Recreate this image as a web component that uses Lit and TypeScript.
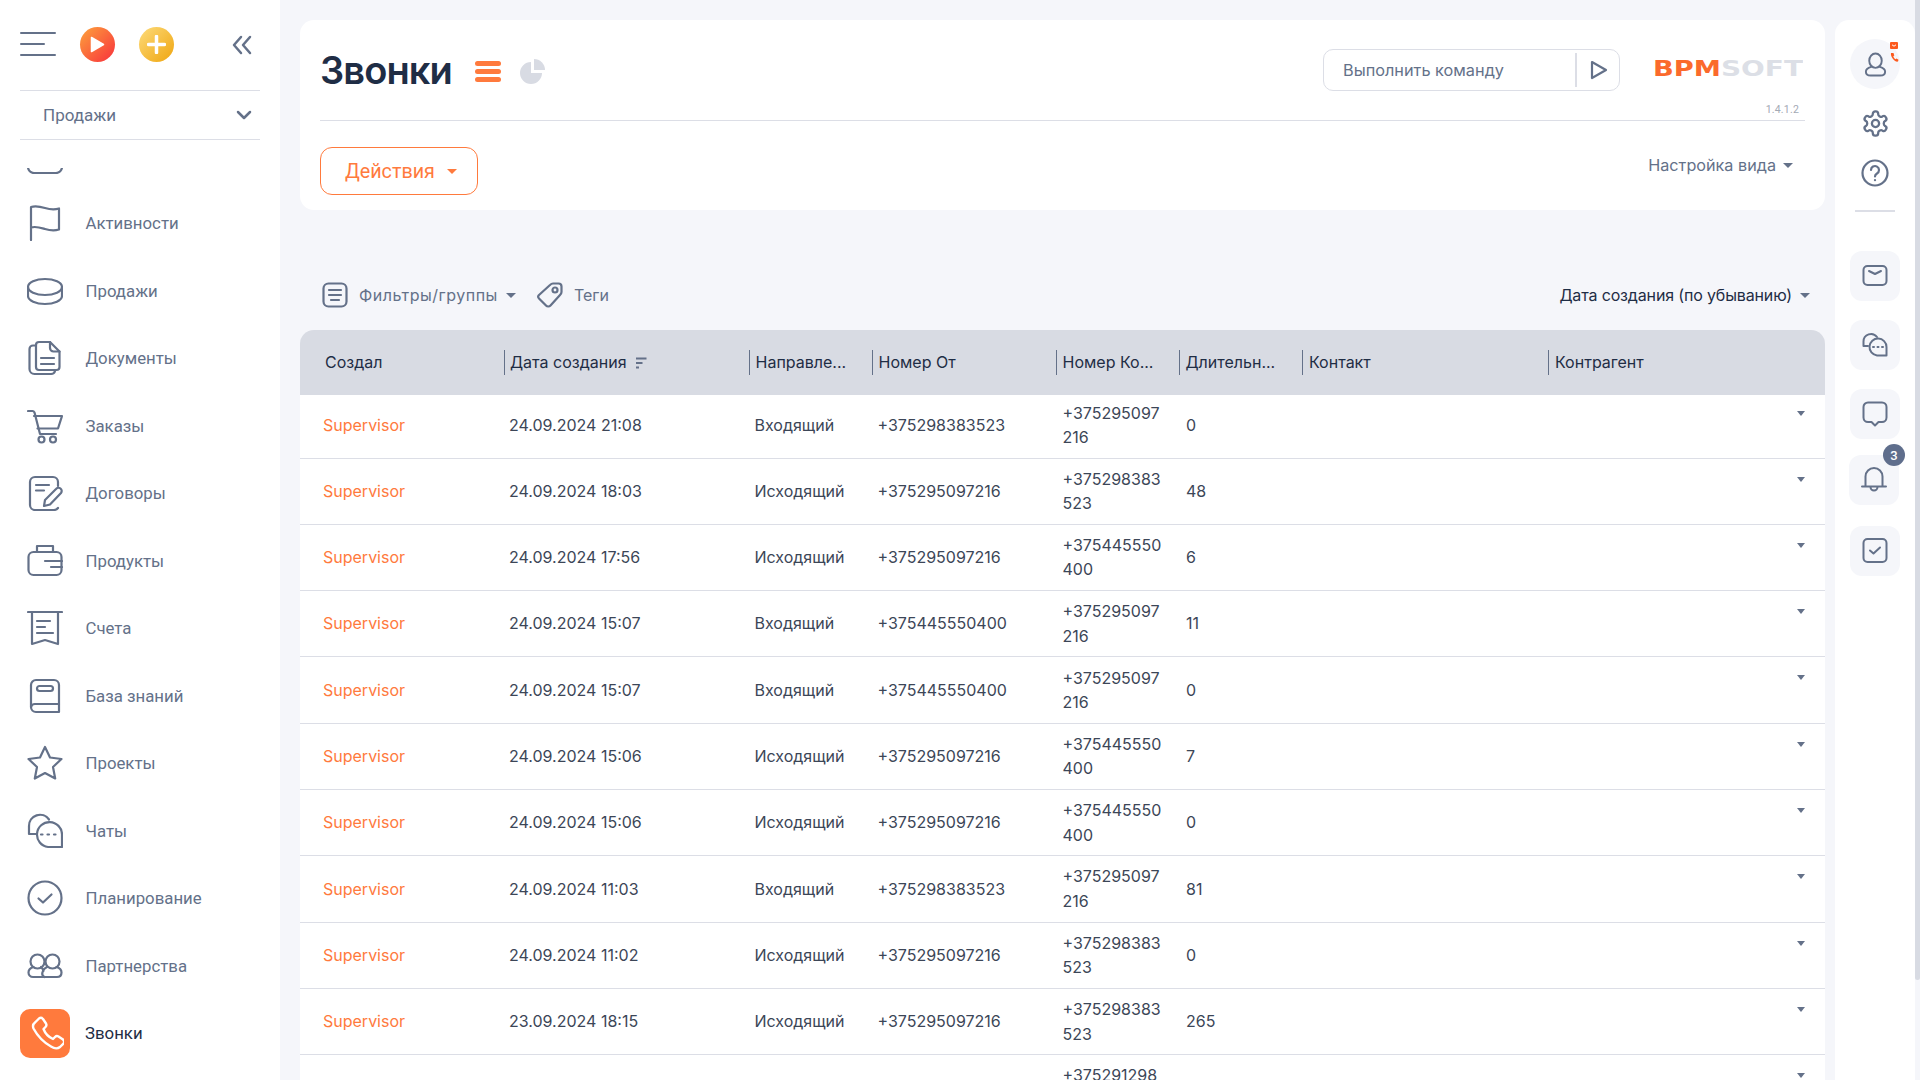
import { LitElement, html, svg, css } from "lit";
import { customElement } from "lit/decorators.js";

const stroke = (body: unknown, size = 36, box = 36, width = 2.2) => html`<svg
  width=${size} height=${size} viewBox="0 0 ${box} ${box}" fill="none" stroke="currentColor"
  stroke-width=${width} stroke-linecap="round" stroke-linejoin="round">${body}</svg>`;

const navIcons: Record<string, unknown> = {
  flag: svg`<path d="M4 35V2c5-1.500 9-.5 14 1s9 2 14 .5v21c-5 1.500-9 1-14-.5S9 21 4 22.500"/>`,
  coin: svg`<ellipse cx="18" cy="14" rx="17" ry="8"/><path d="M1 14v9c0 4.500 8 8 17 8s17-3.500 17-8v-9"/>`,
  docs: svg`<path d="M9 5.500H6a3.500 3.500 0 0 0-3.500 3.500v20A5 5 0 0 0 7.500 34H24a4 4 0 0 0 4-3"/><path d="M9 27V5a3 3 0 0 1 3-3h11l9.500 9.500V27a3 3 0 0 1-3 3H12a3 3 0 0 1-3-3z"/><path d="M23 2v6a3.500 3.500 0 0 0 3.500 3.500h6M14 18h13M14 24h13"/>`,
  cart: svg`<path d="M1 3h4.500c1 0 1.500.5 2 1.500L13 26h16"/><path d="M7 8h28l-4 12.500H10.500"/><circle cx="14.500" cy="31.500" r="3"/><circle cx="26" cy="31.500" r="3"/>`,
  contract: svg`<path d="M31 11V7a5 5 0 0 0-5-5H8a5 5 0 0 0-5 5v23a5 5 0 0 0 5 5h19a5 5 0 0 0 4-2"/><path d="M9 10h13M9 15.500h8"/><path d="M17 31l1-6 11-11a3 3 0 0 1 5 4L23 29.500z"/>`,
  wallet: svg`<path d="M10 9V3h16v6"/><rect x="1.500" y="9" width="33" height="23" rx="5"/><path d="M18 18h17M24 24h11"/>`,
  bill: svg`<path d="M1 2h34M5 2v32l13-4 13 4V2"/><path d="M10 11h13M10 17h8M10 23h16"/>`,
  book: svg`<path d="M4 29V7a5 5 0 0 1 5-5h18a5 5 0 0 1 5 5v27H9a5 5 0 0 1-5-5z"/><path d="M4 29a4 4 0 0 1 4-3h24"/><rect x="10" y="8" width="16" height="5" rx="2.500"/>`,
  star: svg`<path d="M18 2l5 10.500 11.500 1.500-8.500 8 2.200 11.500L18 28l-10.200 5.500L10 22l-8.500-8L13 12.500z"/>`,
  chats: svg`<path d="M9 21H2v-8a11 11 0 0 1 20-6.500"/><path d="M35 34H21a12.500 12.500 0 1 1 14-12.500z"/><path d="M14 21.500h1.500M20.500 21.500h1.500M27 21.500h1.500"/>`,
  check: svg`<circle cx="18" cy="18" r="16.500"/><path d="M11.500 18.500l4.500 4 8.500-8"/>`,
  partners: svg`<circle cx="10.500" cy="13.500" r="7"/><circle cx="25.500" cy="13.500" r="7"/><path d="M6.500 19C3 20 1.500 22 1.500 24.500 1.500 27 3.500 29 6 29h24c3 0 4.500-2 4.500-4.500S33 20 29.500 19M17.500 29c-2-1-3-3-1.500-6 .5-1.500 2-3 4-4M14 19c1 1 2 2 2.500 4"/>`,
  top: svg`<rect x="1" y="19" width="34" height="16" rx="6"/>`,
};

const phone = svg`<path d="M9 8.500l4-4a3 3 0 0 1 4 .5l3 4.500a3 3 0 0 1-.5 3.500l-2 2c1.500 4 5 8 9.500 10l2-2a3 3 0 0 1 3.500-.5l4.500 3a3 3 0 0 1 .5 4l-3.500 3.500c-2.500 2-6 1.500-9-.5C17 28 11 21 7.500 14.500c-1-2.500-.5-4.500 1.500-6z"/>`;

const nav = [
  ["Активности", "flag"],
  ["Продажи", "coin"],
  ["Документы", "docs"],
  ["Заказы", "cart"],
  ["Договоры", "contract"],
  ["Продукты", "wallet"],
  ["Счета", "bill"],
  ["База знаний", "book"],
  ["Проекты", "star"],
  ["Чаты", "chats"],
  ["Планирование", "check"],
  ["Партнерства", "partners"],
];

const columns = [
  ["Создал", 203.5],
  ["Дата создания", 245.5],
  ["Направле...", 123],
  ["Номер От", 184],
  ["Номер Ко...", 123],
  ["Длительн...", 122.5],
  ["Контакт", 246],
  ["Контрагент", 277],
] as const;

const rows = [
  ["24.09.2024 21:08", "Входящий", "+375298383523", "+375295097216", "0"],
  ["24.09.2024 18:03", "Исходящий", "+375295097216", "+375298383523", "48"],
  ["24.09.2024 17:56", "Исходящий", "+375295097216", "+375445550400", "6"],
  ["24.09.2024 15:07", "Входящий", "+375445550400", "+375295097216", "11"],
  ["24.09.2024 15:07", "Входящий", "+375445550400", "+375295097216", "0"],
  ["24.09.2024 15:06", "Исходящий", "+375295097216", "+375445550400", "7"],
  ["24.09.2024 15:06", "Исходящий", "+375295097216", "+375445550400", "0"],
  ["24.09.2024 11:03", "Входящий", "+375298383523", "+375295097216", "81"],
  ["24.09.2024 11:02", "Исходящий", "+375295097216", "+375298383523", "0"],
  ["23.09.2024 18:15", "Исходящий", "+375295097216", "+375298383523", "265"],
];

@customElement("app-root")
export class AppRoot extends LitElement {
  static styles = css`
    :host {
      display: grid;
      grid-template-columns: 280px 1fr 80px 5px;
      height: 1080px;
      overflow: hidden;
      background: #f5f6fa;
      font-family: "Roboto", sans-serif;
      color: #647189;
    }
    .caret {
      display: inline-block;
      border-left: 5px solid transparent;
      border-right: 5px solid transparent;
      border-top: 5px solid currentColor;
    }

    /* left menu */
    .side {
      background: #fff;
      height: 1080px;
      overflow: hidden;
      display: flex;
      flex-direction: column;
    }
    .side-top {
      display: flex;
      align-items: center;
      height: 90px;
      padding: 0 20px;
      flex: none;
    }
    .burger {
      display: flex;
      flex-direction: column;
      gap: 8.5px;
      width: 36px;
      margin-top: -2px;
    }
    .burger i {
      height: 2.5px;
      background: #647189;
      border-radius: 2px;
    }
    .burger i:nth-child(2) {
      width: 25px;
    }
    .round {
      width: 35px;
      height: 35px;
      border-radius: 50%;
      display: flex;
      align-items: center;
      justify-content: center;
      margin-top: -1px;
    }
    .round.play {
      margin-left: 24px;
      background: linear-gradient(135deg, #fda33c, #f8303c);
    }
    .round.plus {
      margin-left: 24px;
      background: linear-gradient(135deg, #fddb7a, #efa50f);
    }
    .collapse {
      margin-left: auto;
      margin-right: 8px;
      display: flex;
      margin-top: -1px;
    }
    .section {
      flex: none;
      margin: 0 20px;
      height: 48px;
      border-top: 1.5px solid #dcdee6;
      border-bottom: 1.5px solid #dcdee6;
      display: flex;
      align-items: center;
      justify-content: space-between;
      padding: 0 8px 0 23px;
      font-size: 17px;
    }
    .nav {
      flex: 1;
      overflow: hidden;
      margin-top: 28px;
    }
    .nav-list {
      margin-top: -46px;
    }
    .item {
      height: 67.5px;
      display: flex;
      align-items: center;
      font-size: 16.8px;
      padding-left: 27px;
      gap: 22.5px;
    }
    .item svg {
      flex: none;
    }
    .item.active {
      color: #1f2d45;
      padding-left: 20px;
      gap: 15px;
    }
    .active-box {
      width: 50px;
      height: 49px;
      border-radius: 10px;
      background: #ff7a3d;
      color: #fff;
      display: flex;
      align-items: center;
      justify-content: center;
    }

    /* centre */
    .main {
      padding: 20px 10px 0 20px;
      min-width: 0;
      overflow: hidden;
      height: 1080px;
      box-sizing: border-box;
    }
    .card {
      background: #fff;
      border-radius: 14px;
      height: 190px;
      padding: 0 20px;
      box-sizing: border-box;
    }
    .card-top {
      height: 101px;
      border-bottom: 1.5px solid #dcdee6;
      box-sizing: border-box;
      display: flex;
      align-items: center;
      position: relative;
    }
    .title {
      font-family: "Inter", sans-serif;
      font-size: 38px;
      font-weight: 600;
      letter-spacing: -0.9px;
      color: #1f2d45;
      margin: 0;
      line-height: 100px;
    }
    .view-icons {
      display: flex;
      align-items: center;
      gap: 19px;
      margin: 3px 0 0 23px;
    }
    .list-ico {
      display: flex;
      flex-direction: column;
      gap: 3px;
      width: 26px;
    }
    .list-ico i {
      height: 5px;
      border-radius: 3px;
      background: #ff7a3d;
    }
    .command {
      margin-left: auto;
      width: 297px;
      height: 42px;
      box-sizing: border-box;
      border: 1.5px solid #dcdee6;
      border-radius: 10px;
      display: flex;
      align-items: center;
      font-family: "Inter", sans-serif;
      font-size: 16.3px;
      padding-left: 19px;
      margin-top: -1px;
    }
    .command span {
      flex: 1;
    }
    .command .run {
      width: 44px;
      height: 34px;
      border-left: 2px solid #dcdee6;
      display: flex;
      align-items: center;
      justify-content: center;
      padding-left: 2px;
      box-sizing: border-box;
    }
    .brand {
      width: 150px;
      margin-left: 33px;
      margin-right: 2px;
      margin-top: -3px;
      display: flex;
    }
    .version {
      position: absolute;
      right: 6px;
      top: 83px;
      font-size: 10.5px;
      color: #a3a9b5;
      letter-spacing: 0.2px;
    }
    .card-bottom {
      display: flex;
      align-items: flex-start;
      justify-content: space-between;
      padding-top: 26px;
    }
    .actions {
      height: 48px;
      width: 158px;
      box-sizing: border-box;
      border: 1.5px solid #ff7a3d;
      border-radius: 12px;
      color: #ff7a3d;
      background: #fff;
      font-family: "Roboto", sans-serif;
      font-size: 19.7px;
      display: flex;
      align-items: center;
      gap: 12px;
      padding: 0 0 0 24px;
    }
    .view-set {
      display: flex;
      align-items: center;
      gap: 7px;
      font-family: "Inter", sans-serif;
      font-size: 16.2px;
      padding: 6px 12px 0 0;
      height: 24px;
    }
    .toolbar {
      display: flex;
      align-items: center;
      height: 120px;
      padding: 50px 15px 0 22px;
      box-sizing: border-box;
      font-size: 16px;
      font-family: "Inter", sans-serif;
    }
    .toolbar .filter {
      margin-left: 11px;
      letter-spacing: 0.5px;
    }
    .toolbar .caret {
      margin-left: 8px;
    }
    .toolbar .tag {
      margin: 0 11px 0 21px;
      display: flex;
    }
    .sort {
      margin-left: auto;
      color: #1f2d45;
      letter-spacing: -0.15px;
    }
    .sort-caret {
      color: #647189;
    }

    /* table */
    .thead {
      display: flex;
      height: 65px;
      background: #d8dbe3;
      border-radius: 14px 14px 0 0;
      align-items: center;
      color: #1f2d45;
      font-family: "Inter", sans-serif;
      font-size: 16px;
    }
    .th {
      box-sizing: border-box;
      height: 25px;
      line-height: 25px;
      padding-left: 5.5px;
      border-left: 1px solid #647189;
      display: flex;
      align-items: center;
      flex: none;
      white-space: nowrap;
    }
    .th:first-child {
      border-left: none;
      padding-left: 25px;
    }
    .th:nth-child(n + 7) {
      padding-left: 6.5px;
    }
    .sort-ico {
      margin-left: 9px;
      display: flex;
    }
    .tr {
      display: flex;
      background: #fff;
      align-items: center;
      height: 66.3px;
      border-bottom: 1.5px solid #dcdee6;
      box-sizing: border-box;
      color: #3c4657;
      font-family: "Inter", sans-serif;
      font-size: 16px;
      line-height: 24.5px;
      position: relative;
    }
    .tr.first {
      height: 63.5px;
      padding-bottom: 2px;
    }
    .td {
      flex: none;
      box-sizing: border-box;
      padding-left: 5.5px;
    }
    .td:first-child {
      padding-left: 23px;
      color: #ff7a3d;
    }
    .td.to {
      padding-left: 6.5px;
      padding-right: 10px;
    }
    .td.num {
      padding-left: 7px;
    }
    .row-caret {
      position: absolute;
      right: 20px;
      top: 18px;
      border-left-width: 4.5px;
      border-right-width: 4.5px;
      color: #647189;
    }
    .tr.first .row-caret {
      top: 16px;
    }

    /* right bar */
    .right {
      margin-top: 20px;
      background: #fff;
      border-radius: 14px 14px 0 0;
      display: flex;
      flex-direction: column;
      align-items: center;
      height: 1060px;
      box-sizing: border-box;
    }
    .avatar {
      width: 50px;
      height: 50px;
      border-radius: 50%;
      background: #f5f6fa;
      margin-top: 19px;
      position: relative;
      display: flex;
      align-items: center;
      justify-content: center;
    }
    .avatar-marks {
      position: absolute;
      left: 40px;
      top: 3px;
      display: flex;
    }
    .bar-ico {
      display: flex;
    }
    .gear {
      margin-top: 20px;
    }
    .help {
      margin-top: 21px;
    }
    .rule {
      width: 40px;
      height: 1.5px;
      background: #dcdee6;
      margin-top: 23px;
      margin-bottom: 39.5px;
    }
    .tile {
      width: 50px;
      height: 50px;
      border-radius: 12px;
      background: #f5f6fa;
      display: flex;
      align-items: center;
      justify-content: center;
      position: relative;
      margin-bottom: 19px;
    }
    .tile.bell {
      margin: -3px 0 21px -2px;
    }
    .badge {
      position: absolute;
      right: -6px;
      top: -11px;
      width: 22px;
      height: 22px;
      border-radius: 50%;
      background: #5f6e8c;
      color: #fff;
      font-size: 13px;
      font-weight: 500;
      display: flex;
      align-items: center;
      justify-content: center;
    }
    .scrollbar {
      background: #f5f6fa;
      height: 1080px;
    }
    .scrollbar i {
      display: block;
      height: 980px;
      background: #d8dbe3;
      border-radius: 0 0 3px 3px;
    }
  `;

  private renderSide() {
    return html`<aside class="side">
      <div class="side-top">
        <div class="burger"><i></i><i></i><i></i></div>
        <div class="round play">
          <svg width="15" height="17" viewBox="0 0 15 17"><path d="M1.5 1.500L13.500 8.500 1.500 15.500z" fill="#fff" stroke="#fff" stroke-width="1.500" stroke-linejoin="round"/></svg>
        </div>
        <div class="round plus">
          <svg width="19" height="19" viewBox="0 0 19 19"><path d="M9.500 1.500v16M1.500 9.500h16" stroke="#fff" stroke-width="3.500" stroke-linecap="round"/></svg>
        </div>
        <div class="collapse">
          <svg width="20" height="20" viewBox="0 0 20 20" fill="none" stroke="#647189" stroke-width="2.500" stroke-linecap="round" stroke-linejoin="round"><path d="M9 2L2 10l7 8M18 2l-7 8 7 8"/></svg>
        </div>
      </div>
      <div class="section">
        <span>Продажи</span>
        <svg width="16" height="10" viewBox="0 0 16 10" fill="none" stroke="#647189" stroke-width="2.500" stroke-linecap="round" stroke-linejoin="round"><path d="M2 2l6 6 6-6"/></svg>
      </div>
      <div class="nav">
        <div class="nav-list">
          <div class="item">${stroke(navIcons.top)}</div>
          ${nav.map(
            ([label, icon]) => html`<div class="item">${stroke(navIcons[icon])}<span>${label}</span></div>`
          )}
          <div class="item active">
            <div class="active-box">${stroke(phone, 38, 38, 2.4)}</div>
            <span>Звонки</span>
          </div>
        </div>
      </div>
    </aside>`;
  }

  private renderCard() {
    return html`<section class="card">
      <div class="card-top">
        <h1 class="title">Звонки</h1>
        <div class="view-icons">
          <div class="list-ico"><i></i><i></i><i></i></div>
          <svg width="25" height="25" viewBox="0 0 25 25" fill="#d8dbe3"><path d="M11 3a11 11 0 1 0 11 11H11z"/><path d="M14 0a11 11 0 0 1 11 11H14z"/></svg>
        </div>
        <div class="command">
          <span>Выполнить команду</span>
          <div class="run">
            <svg width="18" height="20" viewBox="0 0 18 20" fill="none" stroke="#647189" stroke-width="2.200" stroke-linejoin="round"><path d="M2 2l14 8-14 8z"/></svg>
          </div>
        </div>
        <div class="brand">
          <svg width="150" height="26" viewBox="0 0 150 26">
            <text x="0" y="20" font-family="DejaVu Sans" font-weight="700" font-size="21" textLength="68" lengthAdjust="spacingAndGlyphs" fill="#fb6a2c">BPM</text>
            <text x="68" y="20" font-family="DejaVu Sans" font-weight="700" font-size="21" textLength="82" lengthAdjust="spacingAndGlyphs" fill="#dcdfe6">SOFT</text>
          </svg>
        </div>
        <span class="version">1.4.1.2</span>
      </div>
      <div class="card-bottom">
        <button class="actions">Действия <span class="caret"></span></button>
        <div class="view-set">Настройка вида <span class="caret"></span></div>
      </div>
    </section>`;
  }

  private renderToolbar() {
    return html`<div class="toolbar">
      <svg width="26" height="26" viewBox="0 0 26 26" fill="none" stroke="#647189" stroke-width="2.200" stroke-linecap="round"><rect x="1.500" y="1.500" width="23" height="23" rx="5"/><path d="M7 8h12M7 13h12M9 18h8"/></svg>
      <span class="filter">Фильтры/группы</span><span class="caret"></span>
      <span class="tag">
        <svg width="26" height="26" viewBox="0 0 26 26" fill="none" stroke="#647189" stroke-width="2.200" stroke-linejoin="round"><path d="M2 13L13 3c1-1 2-1.500 3-1.500h5.500a3 3 0 0 1 3 3V10c0 1-.5 2-1.500 3L13.500 23.500a3 3 0 0 1-4.500 0L2 16.500a2.500 2.500 0 0 1 0-3.500z"/><circle cx="18" cy="8" r="2.500"/></svg>
      </span>
      <span>Теги</span>
      <span class="sort">Дата создания (по убыванию)</span><span class="caret sort-caret"></span>
    </div>`;
  }

  private renderTable() {
    return html`<div class="thead">
        ${columns.map(
          ([label, w], i) => html`<div class="th" style="width:${w}px">
            ${label}
            ${i === 1
              ? html`<span class="sort-ico">
                  <svg width="11" height="12" viewBox="0 0 11 12" fill="#647189"><rect x="0" y="0.500" width="10.500" height="2"/><rect x="0" y="5" width="6.500" height="2"/><rect x="0" y="9.500" width="3" height="2"/></svg>
                </span>`
              : ""}
          </div>`
        )}
      </div>
      ${rows.map(
        (r, i) => html`<div class=${i === 0 ? "tr first" : "tr"}>
          <div class="td" style="width:${columns[0][1]}px">Supervisor</div>
          <div class="td" style="width:${columns[1][1]}px">${r[0]}</div>
          <div class="td" style="width:${columns[2][1]}px">${r[1]}</div>
          <div class="td" style="width:${columns[3][1]}px">${r[2]}</div>
          <div class="td to" style="width:${columns[4][1]}px">${r[3].slice(0, 10)}<br />${r[3].slice(10)}</div>
          <div class="td num" style="width:${columns[5][1]}px">${r[4]}</div>
          <span class="caret row-caret"></span>
        </div>`
      )}
      <div class="tr">
        <div class="td" style="width:${columns[0][1] + columns[1][1] + columns[2][1] + columns[3][1]}px"></div>
        <div class="td to" style="width:${columns[4][1]}px">+375291298<br />&nbsp;</div>
        <span class="caret row-caret"></span>
      </div>`;
  }

  private renderRight() {
    const tile = (body: unknown) => html`<div class="tile">${stroke(body, 26, 26, 2)}</div>`;
    return html`<aside class="right">
      <div class="avatar">
        ${stroke(svg`<ellipse cx="13" cy="9" rx="6.500" ry="7.500"/><path d="M8.500 15.500C5 16.500 3 18.500 3 20.500 3 23 5 24.500 8 24.500h10c3 0 5-1.500 5-4 0-2-2-4-5.500-5"/>`, 25, 26, 2)}
        <div class="avatar-marks">
          <svg width="9" height="21" viewBox="0 0 9 21">
            <rect x="0" y="0" width="8" height="7" rx="1" fill="#fc5a1e"/>
            <path d="M2 2.800l2 1.400 2-1.400" fill="none" stroke="#fff" stroke-width="1"/>
            <path d="M1 11c-.5 2 .5 4 2 6s3.500 3 5 2.500l.5-1.800-2-1.200-1 .8c-1-.6-1.800-1.800-2.200-3l1-.8-.8-2.500z" fill="#fc5a1e"/>
          </svg>
        </div>
      </div>
      <div class="bar-ico gear">
        ${stroke(svg`<path d="M12.220 2h-.44a2 2 0 0 0-2 2v.18a2 2 0 0 1-1 1.730l-.43.250a2 2 0 0 1-2 0l-.15-.08a2 2 0 0 0-2.730.730l-.22.380a2 2 0 0 0 .730 2.730l.15.100a2 2 0 0 1 1 1.720v.510a2 2 0 0 1-1 1.740l-.15.090a2 2 0 0 0-.730 2.730l.22.380a2 2 0 0 0 2.730.730l.15-.08a2 2 0 0 1 2 0l.43.250a2 2 0 0 1 1 1.730V20a2 2 0 0 0 2 2h.44a2 2 0 0 0 2-2v-.18a2 2 0 0 1 1-1.730l.43-.25a2 2 0 0 1 2 0l.15.08a2 2 0 0 0 2.730-.730l.22-.39a2 2 0 0 0-.730-2.730l-.15-.08a2 2 0 0 1-1-1.740v-.5a2 2 0 0 1 1-1.740l.15-.09a2 2 0 0 0 .730-2.730l-.22-.38a2 2 0 0 0-2.730-.730l-.15.08a2 2 0 0 1-2 0l-.43-.25a2 2 0 0 1-1-1.730V4a2 2 0 0 0-2-2z"/><circle cx="12" cy="12" r="3"/>`, 29, 24, 1.9)}
      </div>
      <div class="bar-ico help">
        ${stroke(svg`<circle cx="14" cy="14" r="12.500"/><path d="M10 11a4 4 0 1 1 6 3.500c-1.500 1-2 1.500-2 3"/><path d="M14 21v.2"/>`, 28, 28, 2.2)}
      </div>
      <div class="rule"></div>
      ${tile(svg`<rect x="1.500" y="3" width="23" height="19" rx="4"/><path d="M7 8l6 3 6-3"/>`)}
      ${tile(svg`<path d="M6 14H1.500V9.500a7.500 7.500 0 0 1 13.500-4.500"/><path d="M24.500 23.500H15a8.500 8.500 0 1 1 9.500-8.500z"/><path d="M11 15h1M15.500 15h1M20 15h1"/>`)}
      ${tile(svg`<path d="M6 1.500h14a4.500 4.500 0 0 1 4.500 4.500v10.500a4.500 4.500 0 0 1-4.500 4.500h-3.500L13 24.500 9.500 21H6a4.500 4.500 0 0 1-4.500-4.500V6A4.500 4.500 0 0 1 6 1.500z"/>`)}
      <div class="tile bell">
        ${stroke(svg`<path d="M4.500 19V9.500a8.500 8.500 0 0 1 17 0V19"/><path d="M1 19.500h24M9.500 20a3.500 3.500 0 0 0 7 0"/>`, 26, 26, 2)}
        <span class="badge">3</span>
      </div>
      ${tile(svg`<rect x="1.500" y="1" width="23" height="23" rx="4"/><path d="M8 12.500l3.500 3 6.500-6"/>`)}
    </aside>`;
  }

  render() {
    return html`${this.renderSide()}
      <main class="main">${this.renderCard()}${this.renderToolbar()}${this.renderTable()}</main>
      ${this.renderRight()}
      <div class="scrollbar"><i></i></div>`;
  }
}
